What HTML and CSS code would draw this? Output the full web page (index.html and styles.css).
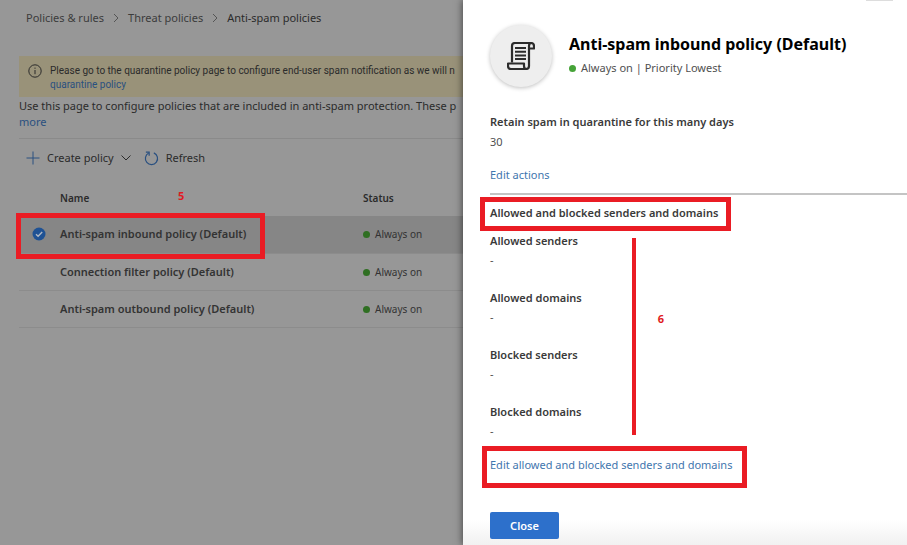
FILE: index.html
```
<!DOCTYPE html>
<html lang="en">
<head>
<meta charset="utf-8">
<title>Anti-spam policies</title>
<link rel="stylesheet" href="styles.css">
</head>
<body>
<div class="screen">
  <main class="page">
    <nav class="breadcrumb" aria-label="Breadcrumb">
      <a href="#">Policies &amp; rules</a>
      <svg class="chevron" viewBox="0 0 6 10"><path d="M1 1l4 4-4 4"/></svg>
      <a href="#">Threat policies</a>
      <svg class="chevron" viewBox="0 0 6 10"><path d="M1 1l4 4-4 4"/></svg>
      <span class="current">Anti-spam policies</span>
    </nav>
    <div class="notice">
      <svg class="info" viewBox="0 0 14 14"><circle cx="7" cy="7" r="6.2"/><path d="M7 6v4.2M7 3.6v1.2"/></svg>
      <p>Please go to the quarantine policy page to configure end-user spam notification as we will n<br><a href="#">quarantine policy</a></p>
    </div>
    <p class="intro">Use this page to configure policies that are included in anti-spam protection. These p<br><a href="#">more</a></p>
    <div class="toolbar">
      <button type="button">
        <svg class="plus" viewBox="0 0 14 14"><path d="M7 0.5v13M0.5 7h13"/></svg>
        Create policy
        <svg class="caret" viewBox="0 0 10 6"><path d="M0.5 0.5L5 5l4.500-4.500"/></svg>
      </button>
      <button type="button">
        <svg class="refresh" viewBox="0 0 16 16"><path d="M10.500 2A6.500 6.500 0 1 1 5 2.200"/><path class="tip" d="M2 1.200h3.500v3.800"/></svg>
        Refresh
      </button>
    </div>
    <table class="policies">
      <thead>
        <tr><th class="pick"></th><th class="name">Name</th><th>Status</th></tr>
      </thead>
      <tbody>
        <tr class="selected">
          <td class="pick"><svg class="check" viewBox="0 0 14 14"><circle cx="7" cy="7" r="6.500"/><path d="M4 7.200l2.100 2.100L10.200 5"/></svg></td>
          <td class="name">Anti-spam inbound policy (Default)</td>
          <td><span class="status">Always on</span></td>
        </tr>
        <tr>
          <td class="pick"></td>
          <td class="name">Connection filter policy (Default)</td>
          <td><span class="status">Always on</span></td>
        </tr>
        <tr>
          <td class="pick"></td>
          <td class="name">Anti-spam outbound policy (Default)</td>
          <td><span class="status">Always on</span></td>
        </tr>
      </tbody>
    </table>
  </main>

  <aside class="panel">
    <span class="corner"></span>
    <header class="panel-head">
      <div class="avatar">
        <svg viewBox="0 0 28 28">
          <path d="M5 20.500V4Q5 1 8 1H24Q27 1 27 4V6.500H22"/>
          <path d="M22 7V4Q22 1 24.500 1M22 6.500V24Q22 27 19 27H4Q1 27 1 24V21.500H17V24Q17 27 19.500 27"/>
          <path class="lines" d="M8 6h11M8 9.700h11M8 13.400h11M8 17.100h11"/>
        </svg>
      </div>
      <div>
        <h1>Anti-spam inbound policy (Default)</h1>
        <p class="status">Always on | Priority Lowest</p>
      </div>
    </header>
    <section class="retain">
      <h2>Retain spam in quarantine for this many days</h2>
      <p>30</p>
      <a href="#">Edit actions</a>
    </section>
    <section class="senders">
      <h2>Allowed and blocked senders and domains</h2>
      <dl>
        <dt>Allowed senders</dt><dd>-</dd>
        <dt>Allowed domains</dt><dd>-</dd>
        <dt>Blocked senders</dt><dd>-</dd>
        <dt>Blocked domains</dt><dd>-</dd>
      </dl>
      <a href="#">Edit allowed and blocked senders and domains</a>
    </section>
    <footer class="panel-foot"><button type="button">Close</button></footer>
  </aside>

  <div class="mark box-policy"></div>
  <div class="mark box-heading"></div>
  <div class="mark box-edit"></div>
  <div class="bar"></div>
  <span class="step step-five">5</span>
  <span class="step step-six">6</span>
</div>
</body>
</html>
```
FILE: styles.css
```
* { box-sizing: border-box; }
body, h1, h2, p, dl, dd { margin: 0; }
body {
  font-family: "Noto Sans", "Open Sans", sans-serif;
  font-size: 11px;
  line-height: 16px;
  color: #2b2b2b;
  background: #979797;
}
a { color: #2a5080; text-decoration: none; }
svg { fill: none; stroke: currentColor; flex: none; }
button { font: inherit; color: inherit; border: 0; background: none; padding: 0; }

.screen {
  position: relative;
  display: grid;
  grid-template-columns: minmax(0, 1fr) 444px;
  min-height: 100vh;
  overflow: hidden;
}

.page {
  padding: 10px 0 0 19px;
  overflow: hidden;
  white-space: nowrap;
}
.breadcrumb { display: flex; align-items: center; gap: 9px; padding-left: 7px; }
.breadcrumb a { color: #3c3c3c; }
.chevron { width: 6px; height: 10px; color: #555; }
.notice {
  display: flex;
  gap: 8px;
  margin-top: 30px;
  padding: 8px 0 5px 9px;
  background: #999279;
  font-family: Roboto, "Noto Sans", sans-serif;
  font-size: 10px;
  line-height: 14px;
}
.info { width: 14px; height: 14px; }
.intro { padding: 1px 0 8px; border-bottom: 1px solid #8a8a8a; }
.toolbar { display: flex; gap: 13px; padding: 11px 0 0 7px; }
.toolbar button { display: flex; align-items: center; gap: 7px; }
.plus { width: 14px; height: 14px; color: #2a5080; }
.caret { width: 10px; height: 6px; }
.refresh { width: 15px; height: 15px; color: #2a5080; stroke-width: 1.3; }

.policies { width: 100%; margin-top: 13px; border-collapse: collapse; table-layout: fixed; }
.policies th { height: 37px; padding: 0; font-size: 10px; font-weight: 600; text-align: left; }
.policies td { height: 37px; padding: 0; border-bottom: 1px solid #8c8c8c; color: #333; font-size: 10px; }
.policies td.name { font-size: 11px; font-weight: 600; }
.policies .pick { width: 41px; padding-left: 13px; }
.policies .name { width: 303px; }
.selected { background: #868686; }
.check { display: block; width: 14px; height: 14px; }
.check circle { fill: #1f5294; stroke: none; }
.check path { stroke: #b0b8c4; stroke-width: 1.4; }
.status::before {
  content: "";
  display: inline-block;
  width: 7px;
  height: 7px;
  margin-right: 5px;
  border-radius: 50%;
  background: #2f6f22;
}

.panel {
  position: relative;
  display: flex;
  flex-direction: column;
  padding: 25px 0 6px 27px;
  background: linear-gradient(#fff 520px, #f1f1f1);
  box-shadow: -1px 0 7px rgba(0, 0, 0, 0.5);
  color: #505050;
}
.panel a { color: #3f76ae; }
.corner { position: absolute; top: 0; right: 14px; width: 27px; height: 1px; background: #ddd; }
.panel-head { display: flex; align-items: center; gap: 17px; }
.avatar {
  display: grid;
  place-items: center;
  width: 62px;
  height: 62px;
  border-radius: 50%;
  background: #eee;
  box-shadow: 0 1px 4px rgba(0, 0, 0, 0.25);
}
.avatar svg { width: 28px; height: 28px; color: #2c2c2c; stroke-width: 2.2; stroke-linejoin: round; }
.avatar .lines { stroke-width: 2; }
.panel h1 { font-size: 16px; line-height: 24px; font-weight: 700; color: #000; }
.panel .status { line-height: 24px; }
.panel .status::before { background: #46a338; }
.panel h2, .panel dt { font-size: 11px; font-weight: 600; color: #3a3a3a; }
.retain { padding: 27px 0 10px; border-bottom: 2px solid #c4c4c4; }
.retain p { padding: 4px 0; }
.retain a { display: block; padding-top: 13px; }
.senders { padding-top: 10px; }
.senders dt { padding-top: 12px; }
.senders dd { padding: 3px 0 10px; }
.senders > a { display: block; padding-top: 8px; }
.panel-foot { margin-top: auto; }
.panel-foot button {
  width: 69px;
  height: 27px;
  border-radius: 2px;
  background: #2d70cb;
  color: #fff;
  font-weight: 600;
}

.mark { position: absolute; border: 5px solid #ea1c24; }
.box-policy { left: 16px; top: 213px; width: 249px; height: 46px; }
.box-heading { right: 176px; top: 197px; width: 251px; height: 34px; }
.box-edit { right: 160px; top: 446px; width: 265px; height: 42px; }
.bar { position: absolute; right: 271px; top: 238px; width: 4px; height: 197px; background: #ea1c24; }
.step { position: absolute; color: #e01b22; font-weight: 700; }
.step-five { left: 178px; top: 188px; }
.step-six { right: 243px; top: 311px; }
```
